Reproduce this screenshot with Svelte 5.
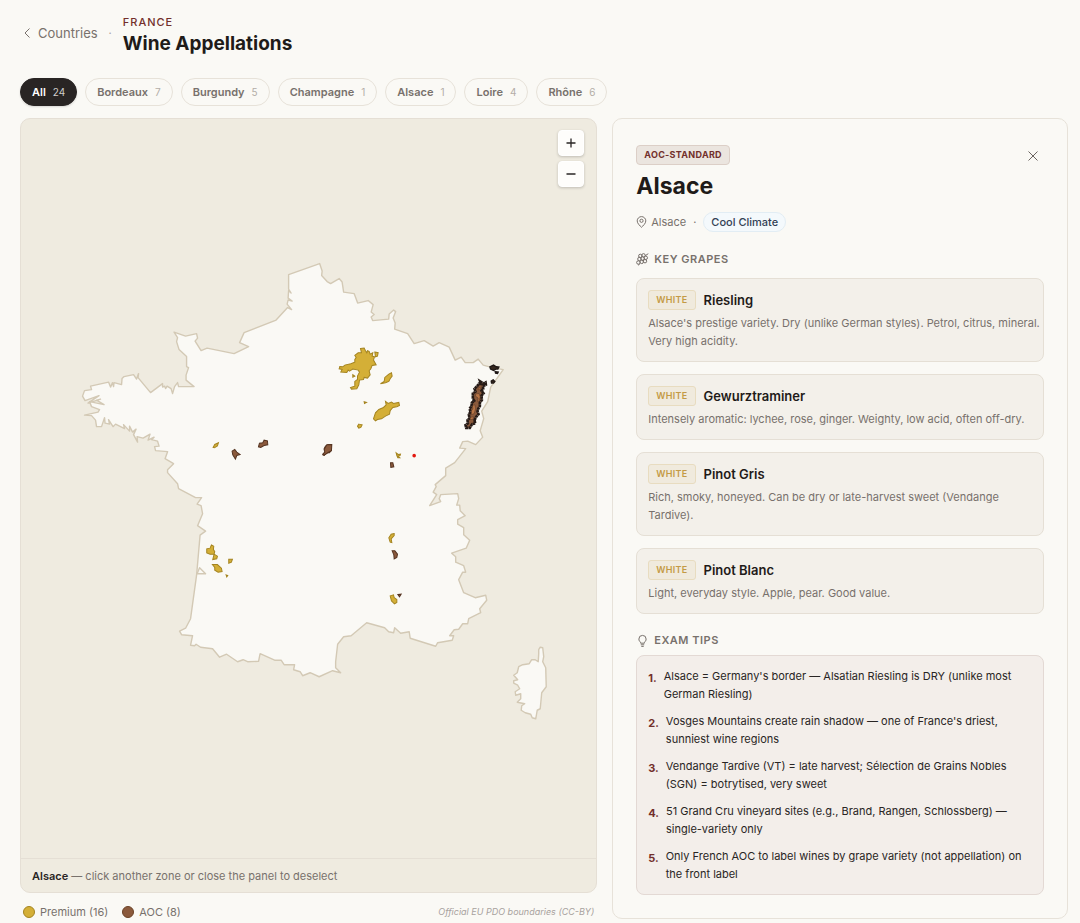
<script>
  const regions = [
    ['All', 24], ['Bordeaux', 7], ['Burgundy', 5], ['Champagne', 1],
    ['Alsace', 1], ['Loire', 4], ['Rhône', 6]
  ];
  let active = $state('All');

  const grapes = [
    ['Riesling', "Alsace's prestige variety. Dry (unlike German styles). Petrol, citrus, mineral. Very high acidity."],
    ['Gewurztraminer', 'Intensely aromatic: lychee, rose, ginger. Weighty, low acid, often off-dry.'],
    ['Pinot Gris', 'Rich, smoky, honeyed. Can be dry or late-harvest sweet (Vendange Tardive).'],
    ['Pinot Blanc', 'Light, everyday style. Apple, pear. Good value.']
  ];

  const tips = [
    "Alsace = Germany's border — Alsatian Riesling is DRY (unlike most German Riesling)",
    "Vosges Mountains create rain shadow — one of France's driest, sunniest wine regions",
    'Vendange Tardive (VT) = late harvest; Sélection de Grains Nobles (SGN) = botrytised, very sweet',
    '51 Grand Cru vineyard sites (e.g., Brand, Rangen, Schlossberg) — single-variety only',
    'Only French AOC to label wines by grape variety (not appellation) on the front label'
  ];

  const mainland = 'M174 332L185.500 336 196.500 333.500 197.500 338 195 341 201 350.500 207 348 234 353.500 248.500 346.500 239.500 342.500 244 332.500 276 320 287.500 307.500 291.500 309.500 287 304 288 300 292 301 288 298 288.500 290.500 291 293 288.500 289 288.500 274.500 319.500 263.500 322 271 321.500 275.500 327 281.500 330.500 283.500 339 278.500 342 282 343.500 292 354 293.500 357.500 303 368 300.500 373 304.500 371 312 374 314.500 371 317 372.500 320.500 388.500 319 389 314 393.500 310 395.500 311.500 393 318 395 323 394.500 329 407.500 333.500 414 343.500 424 340.500 433 346 439 342.500 449 347 455 360 461 357 465 362.500 473 362.500 478 359 483 365 492 367.500 503 369.500 490.500 387 487.500 401.500 481.500 411 483.500 418.500 480 430.500 482.500 437 475.500 444.500 467.500 441 462.500 441.500 459.500 448 465.500 448.500 454.500 462.500 445.500 468 445.500 475.500 435 484.500 436 486.500 433 492 436.500 494.500 429.500 505.500 440.500 501.500 439 498.500 440.500 494.500 457.500 493.500 458.500 498.500 456.500 505 459.500 505 460 510.500 465 515.500 457.500 519.500 457.500 524 463.500 527.500 463.500 534.500 469.500 540 466 548 451.500 553 455.500 556.500 455.500 562 463.500 565.500 465.500 572 462.500 572 458.500 579.500 463.500 592.500 475 597.500 485.500 595 486.500 600 479.500 608.500 480.500 612.500 468.500 618.500 467.500 623.500 462.500 623.500 458.500 629 454 629.500 449.500 635.500 453.500 635.500 452 640 437.500 642.500 435.500 646 410 638 409 631.500 400.500 633 394.500 627.500 393.500 632.500 388.500 631.500 384.500 627.500 366.500 622.500 351 635.500 343.500 636.500 337.500 644 335.500 661.500 335.500 667.500 340.500 672.500 332.500 670.500 319 676.500 310 672.500 302.500 675.500 300 671.500 293.500 669.500 294.500 664.500 284 664.500 281 660 274.500 660 260 653.500 258.500 661 247.500 661.500 243 659.500 237.500 661.500 226.500 654 219.500 657 212.500 648.500 200.500 647 196 644 194.500 645.500 190.500 645 192.500 635.500 181.500 634.500 179.500 631 185.500 628 190.500 618.500 196.500 575 200 535 205.500 531 197.500 525.500 202.500 513.500 201 505.500 197 504 201.500 497.500 195.500 497.500 178.500 488.500 177.500 483.500 167.500 472.500 167.500 469.500 173.500 463.500 165 458.500 167.500 451.500 155.500 450.500 154.500 446.500 159 446 157.500 441 151.500 439.500 154 437 148 440 150 434 143 438 137 436.500 137.500 442 133.500 434.500 136 429 132.500 432 129.500 426 129.500 431 123.500 424.500 124.500 428.500 115.500 424 113 426.500 108.500 419.500 109.500 424 105 423 104.500 417.500 101.500 426.500 96.500 426.500 95.500 420 91.500 415.500 84.500 415 98 412 99.500 409.500 91.500 406.500 89.500 401.500 104 404.500 96.500 400 100.500 399 88 403 99 395.500 85 400.500 82.500 396 84.500 390.500 91.500 389.500 90.500 386 108.500 382 110.500 387 112.500 382.500 113.500 386.500 114 382.500 121.500 384.500 122 378.500 124 376.500 133.500 374.500 136.500 379 138.500 373.500 138 377.500 150.500 392.500 162.500 383.500 162.500 387 164.500 386 165.500 388.500 167 386 171 388.500 172.500 393.500 174.500 386.500 177.500 382.500 178.500 386.500 194 386.500 186 380 186 375 188.500 367.500 186.500 366.500 186.500 356.500 179 349.500 176.500 341.500 177.500 337.500Z';
  const corsica = 'M540 647L542.500 647.500 543.500 656.500 542.500 661.500 545.500 667.500 546 686.500 541.500 692.500 540 708.500 537 710 535.500 718.500 532 717.500 530.500 714 525 712.500 521 710 521.500 705.500 524.500 703.500 517 702 520.500 698.500 520.500 693.500 515.500 695 515 691.500 519.500 688.500 517.500 685 513.500 683 513.500 680.500 517.500 679.500 513.500 675 517 672.500 518.500 666.500 522.500 664.500 529 663.500 531.500 659.500 535 659.500 538 661.500 538.500 653.500 538.500 649.500Z';

  // Zone outlines are grouped by survey sheet, drawn at three times map scale.
  const sheets = [
    { at: '320 340', zones: [
      ['premium', 'M121 25L132 24 136 32 140 38 142 32 147 34 150 42 158 38 156 48 163 50 160 60 168 74 156 76 152 86 147 92 150 104 142 114 132 112 130 118 118 120 116 134 110 146 94 147 91 142 104 138 104 124 112 118 112 108 118 96 114 90 98 87 88 93 84 90 80 97 62 96 66 88 57 86 59 79 68 80 74 75 92 71 104 66 104 58 108 52 104 46 114 38 124 38ZM164 36L174 38 172 48 166 50ZM98 104L104 108 98 111Z'],
      ['premium', 'M181 131L192 124 194 112 206 102 214 98 216 108 210 116 206 124 196 128Z'],
      ['premium', 'M196 184L204 190 214 186 220 190 236 187 238 196 230 200 218 202 210 212 208 222 196 228 184 236 172 238 166 242 160 236 166 218 176 208 190 202 198 194ZM132 185L139 187 133 190ZM116 252L126 254 122 262 116 264 112 258Z'],
      ['premium', 'M228 338L234 343 241 342 240 346 234 348 239 353 233 353 230 346Z'],
      ['aoc', 'M8 344L16 334 12 326 16 318 24 314 34 314 32 322 34 330 28 338 20 338 12 346ZM211 368L218 368 221 380 212 382Z'],
      ['chosen', 'M480 124L490 130 496 127 497 134 488 138 489 146 484 152 490 160 484 166 485 180 479 188 479 198 474 206 472 214 475 222 468 230 463 240 465 250 456 252 449 263 438 263 436 255 443 250 442 240 448 234 446 224 451 214 448 206 454 198 455 188 462 182 458 176 458 160 466 154 463 146 471 138 476 131 483 132Z'],
      ['dark', 'M509 80L520 75 528 80 536 81 533 87 527 87 520 91 511 87ZM525 95L534 96 532 100 526 99ZM513 123L519 119 524 124 520 129 514 129Z']
    ]},
    { at: '170 480', zones: [
      ['premium', 'M124 194L131 198 130 208 134 214 132 222 120 222 110 218 110 206 120 204ZM132 222L142 228 140 236 128 238ZM176 237L187 237 184 246 176 249ZM127 253L142 253 154 264 156 274 144 276 134 270 134 262ZM168 284L173 286 170 290Z']
    ]},
    { at: '320 520', zones: [
      ['premium', 'M222 40L213 42 206 53 210 66 215 67 213 56 222 46ZM210 227L220 224 222 232 230 238 230 247 223 251 214 242Z'],
      ['aoc', 'M216 92L224 92 232 102 230 112 222 116 221 104ZM233 223L243 222 238 230Z']
    ]},
    { at: '200 420', zones: [
      ['premium', 'M39 82L44 73 55 68 52 77 43 83Z'],
      ['aoc', 'M96 93L104 88 110 96 120 103 110 106 106 117 98 104ZM175 80L178 69 188 68 192 60 202 62 203 74 192 76 182 82ZM368 102L374 96 372 88 380 74 395 73 394 92 384 97 372 105Z']
    ]}
  ];
</script>

<div class="page">
  <header>
    <a class="back" href="#countries">
      <svg width="14" height="14" viewBox="0 0 14 14" aria-hidden="true"><path d="M9.500 2.500L5 7l4.500 4.500" /></svg>
      Countries
    </a>
    <span class="sep">·</span>
    <div>
      <div class="country">France</div>
      <h1>Wine Appellations</h1>
    </div>
  </header>

  <nav class="chips" aria-label="Regions">
    {#each regions as [name, count]}
      <button class="chip" class:active={active === name} onclick={() => (active = name)}>
        {name}<span>{count}</span>
      </button>
    {/each}
  </nav>

  <main>
    <section class="left">
      <div class="map">
        <svg class="france" viewBox="21 119 575 739" role="img" aria-label="Wine zones of France">
          <path class="land" d={mainland} />
          <path class="land" d="M199.500 567.500L205.500 573.500 197 573.500Z" />
          <path class="land" d={corsica} />
          {#each sheets as sheet}
            <g transform="translate({sheet.at}) scale(0.33333)">
              {#each sheet.zones as [kind, d]}
                <path class={kind} {d} />
              {/each}
            </g>
          {/each}
          <g class="slopes" transform="translate(320 340) scale(0.33333)">
            <path d="M474 143L482 144 480 149 474 149ZM466 162L476 160 480 170 476 184 472 184 474 174 466 168ZM457 196L464 194 466 206 462 220 454 224 454 212 458 206ZM450 232L460 230 458 238 450 238Z" />
          </g>
          <circle cx="414" cy="455.500" r="1.800" fill="#e2180f" stroke="none" />
        </svg>
        <div class="zoom">
          <button aria-label="Zoom in"><svg width="12" height="12" viewBox="0 0 12 12"><path d="M1.500 6h9M6 1.500v9" /></svg></button>
          <button aria-label="Zoom out"><svg width="12" height="12" viewBox="0 0 12 12"><path d="M1.500 6h9" /></svg></button>
        </div>
        <p class="status"><strong>Alsace</strong> — click another zone or close the panel to deselect</p>
      </div>
      <div class="legend">
        <span class="key"><i class="gold"></i>Premium (16)</span>
        <span class="key"><i class="brown"></i>AOC (8)</span>
        <em>Official EU PDO boundaries (CC-BY)</em>
      </div>
    </section>

    <aside>
      <div class="top">
        <span class="tier">AOC-STANDARD</span>
        <button class="close" aria-label="Close">
          <svg width="12" height="12" viewBox="0 0 12 12"><path d="M1.500 1.500l9 9M10.500 1.500l-9 9" /></svg>
        </button>
      </div>
      <h2>Alsace</h2>
      <div class="meta">
        <svg width="11" height="12" viewBox="0 0 11 12" aria-hidden="true"><path d="M5.500 11.300C4 9.800 1.200 7.500 1.200 4.900a4.300 4.300 0 0 1 8.600 0c0 2.600-2.800 4.900-4.300 6.400z" /><circle cx="5.500" cy="4.800" r="1.600" /></svg>
        <span>Alsace</span><span class="dot">·</span><span class="climate">Cool Climate</span>
      </div>

      <h3>
        <svg width="13" height="13" viewBox="0 0 13 13" aria-hidden="true"><circle cx="4.300" cy="2.900" r="1.700" /><circle cx="7.500" cy="2.300" r="1.700" /><circle cx="3.400" cy="6" r="1.700" /><circle cx="6.600" cy="5.500" r="1.700" /><circle cx="9.800" cy="4.800" r="1.700" /><circle cx="2.300" cy="9.500" r="1.700" /><circle cx="5.700" cy="8.900" r="1.700" /><circle cx="9" cy="8.200" r="1.700" /><path d="M9.200 2.700L12.300.700M2 12.200l1.700-1" /></svg>
        Key Grapes
      </h3>
      <div class="grapes">
        {#each grapes as [name, note]}
          <article>
            <div class="name"><span class="white">WHITE</span><h4>{name}</h4></div>
            <p>{note}</p>
          </article>
        {/each}
      </div>

      <h3 class="tips-title">
        <svg width="13" height="13" viewBox="0 0 13 13" aria-hidden="true"><path d="M4.600 9.200V8.300C3.500 7.500 2.900 6.400 2.900 5a3.600 3.600 0 0 1 7.200 0c0 1.400-.6 2.500-1.700 3.300v.9zM4.800 10.800h3.400M5.300 12.400h2.400" /></svg>
        Exam Tips
      </h3>
      <ol>
        {#each tips as tip, i}
          <li><b>{i + 1}.</b><span>{tip}</span></li>
        {/each}
      </ol>
    </aside>
  </main>
</div>

<style>
  :global(body) { background: #faf9f5; }
  .page {
    padding: 14px 12px 5px 20px;
    font-family: Inter, "Liberation Sans", sans-serif;
    font-size: 11px;
    line-height: 18px;
    color: #292524;
  }
  h1, h2, h3, h4, p, ol { margin: 0; padding: 0; }
  button { font: inherit; padding: 0; cursor: pointer; }
  svg { fill: none; stroke: currentColor; flex: none; }

  header { display: flex; align-items: center; color: #78716c; }
  .back { display: flex; align-items: center; gap: 4px; padding-bottom: 6px; font-size: 13px; color: inherit; text-decoration: none; }
  .sep { margin: 0 11px; padding-bottom: 6px; color: #a8a29e; }
  .country { font-size: 11px; line-height: 16px; letter-spacing: 1px; text-transform: uppercase; font-weight: 500; color: #722f2b; }
  h1 { font-size: 19px; line-height: 28px; font-weight: 700; color: #1f1b19; }

  .chips { display: flex; flex-wrap: wrap; gap: 8px; margin-top: 20px; }
  .chip {
    height: 28px; padding: 0 11px; border: 1px solid #e7e2d9; border-radius: 14px;
    background: #faf9f5; color: #78716c; font-weight: 600;
  }
  .chip span { margin-left: 7px; font-size: 10px; font-weight: 400; color: #b3ada7; }
  .chip.active { background: #292524; border-color: #292524; color: #fff; box-shadow: 0 1px 2px #0002; }
  .chip.active span { color: #d0cdca; }

  main { display: grid; grid-template-columns: 19fr 15fr; gap: 15px; margin-top: 12px; align-items: start; }
  .map { position: relative; border: 1px solid #e5dfd5; border-radius: 10px; background: #efebe0; overflow: hidden; }
  .france { display: block; width: 100%; height: auto; }
  .land { fill: #faf9f5; stroke: #d3c9b5; stroke-width: 1.400; stroke-linejoin: round; }
  .premium { fill: #d4af37; stroke: #a48420; stroke-width: 3; }
  .aoc { fill: #8b5a3c; stroke: #553421; stroke-width: 3; }
  .chosen { fill: #8b5a3c; stroke: #261b17; stroke-width: 8; stroke-dasharray: 8 1; }
  .dark { fill: #35271e; stroke: #1f1715; stroke-width: 4; }
  .slopes { fill: #b87546; stroke: #2d1f18; stroke-width: 1; }
  .zoom { position: absolute; top: 11px; right: 12px; display: grid; gap: 5px; }
  .zoom button {
    display: grid; place-items: center; width: 26px; height: 26px; border: 1px solid #fff; border-radius: 4px;
    background: #fefdfb; color: #292524; box-shadow: 0 1px 3px #0003;
  }
  .zoom svg { stroke-width: 1.300; }
  .status { padding: 8px 11px 7px; border-top: 1px solid #e5dfd5; color: #78716c; }
  .status strong { color: #292524; font-weight: 600; }
  .legend { display: flex; align-items: center; gap: 14px; padding: 10px 3px 0; color: #78716c; }
  .key { display: flex; align-items: center; gap: 5px; }
  .key i { width: 10px; height: 10px; border: 1px solid #a48420; border-radius: 50%; background: #d4af37; }
  .key .brown { background: #8b5a3c; border-color: #6b4226; }
  .legend em { margin-left: auto; font-size: 9px; color: #a8a29e; }

  aside { border: 1px solid #e7e2d9; border-radius: 10px; padding: 26px 23px 23px; }
  .top { display: flex; justify-content: space-between; height: 20px; }
  .tier {
    box-sizing: border-box; height: 20px; padding: 0 7px; border: 1px solid #dccfc7; border-radius: 4px; background: #ebe5df;
    font-size: 9px; font-weight: 700; letter-spacing: 0.300px; color: #722f2b;
  }
  .close { width: 22px; height: 22px; border: 0; background: none; color: #6b6560; }
  .close svg { display: block; margin: 5px; }
  h2 { margin-top: 4px; font-size: 23px; line-height: 34px; font-weight: 700; color: #1f1b19; }
  .meta { display: flex; align-items: center; margin-top: 9px; color: #78716c; }
  .meta > span:nth-of-type(1) { margin-left: 4px; }
  .dot { margin: 0 7px; }
  .climate { padding: 0 7px; border: 1px solid #e2edf4; border-radius: 10px; background: #f4f9fc; color: #334155; font-weight: 500; }
  h3 {
    display: flex; align-items: center; gap: 5px; margin: 18px 0 10px;
    font-size: 11px; line-height: 18px; font-weight: 600; letter-spacing: 0.500px; text-transform: uppercase; color: #78716c;
  }
  .grapes { display: grid; gap: 12px; }
  article { padding: 11px 2px 11px 11px; border: 1px solid #e5dfd5; border-radius: 8px; background: #f3f0ea; color: #78716c; }
  .name { display: flex; align-items: center; gap: 8px; margin-bottom: 4px; }
  .white {
    padding: 0 7px; border: 1px solid #e8dcc0; border-radius: 3px; background: #f0eadd;
    font-size: 9px; font-weight: 600; letter-spacing: 0.300px; color: #c49a45;
  }
  h4 { font-size: 13px; line-height: 20px; font-weight: 600; color: #1f1b19; }
  .tips-title { margin: 17px 0 6px; }
  ol { display: grid; gap: 9px; padding: 11px; border: 1px solid #e3d9d4; border-radius: 8px; background: #f3eeea; list-style: none; }
  li { display: flex; gap: 7px; }
  li b { padding-top: 2px; line-height: 18px; color: #722f2b; }
</style>
